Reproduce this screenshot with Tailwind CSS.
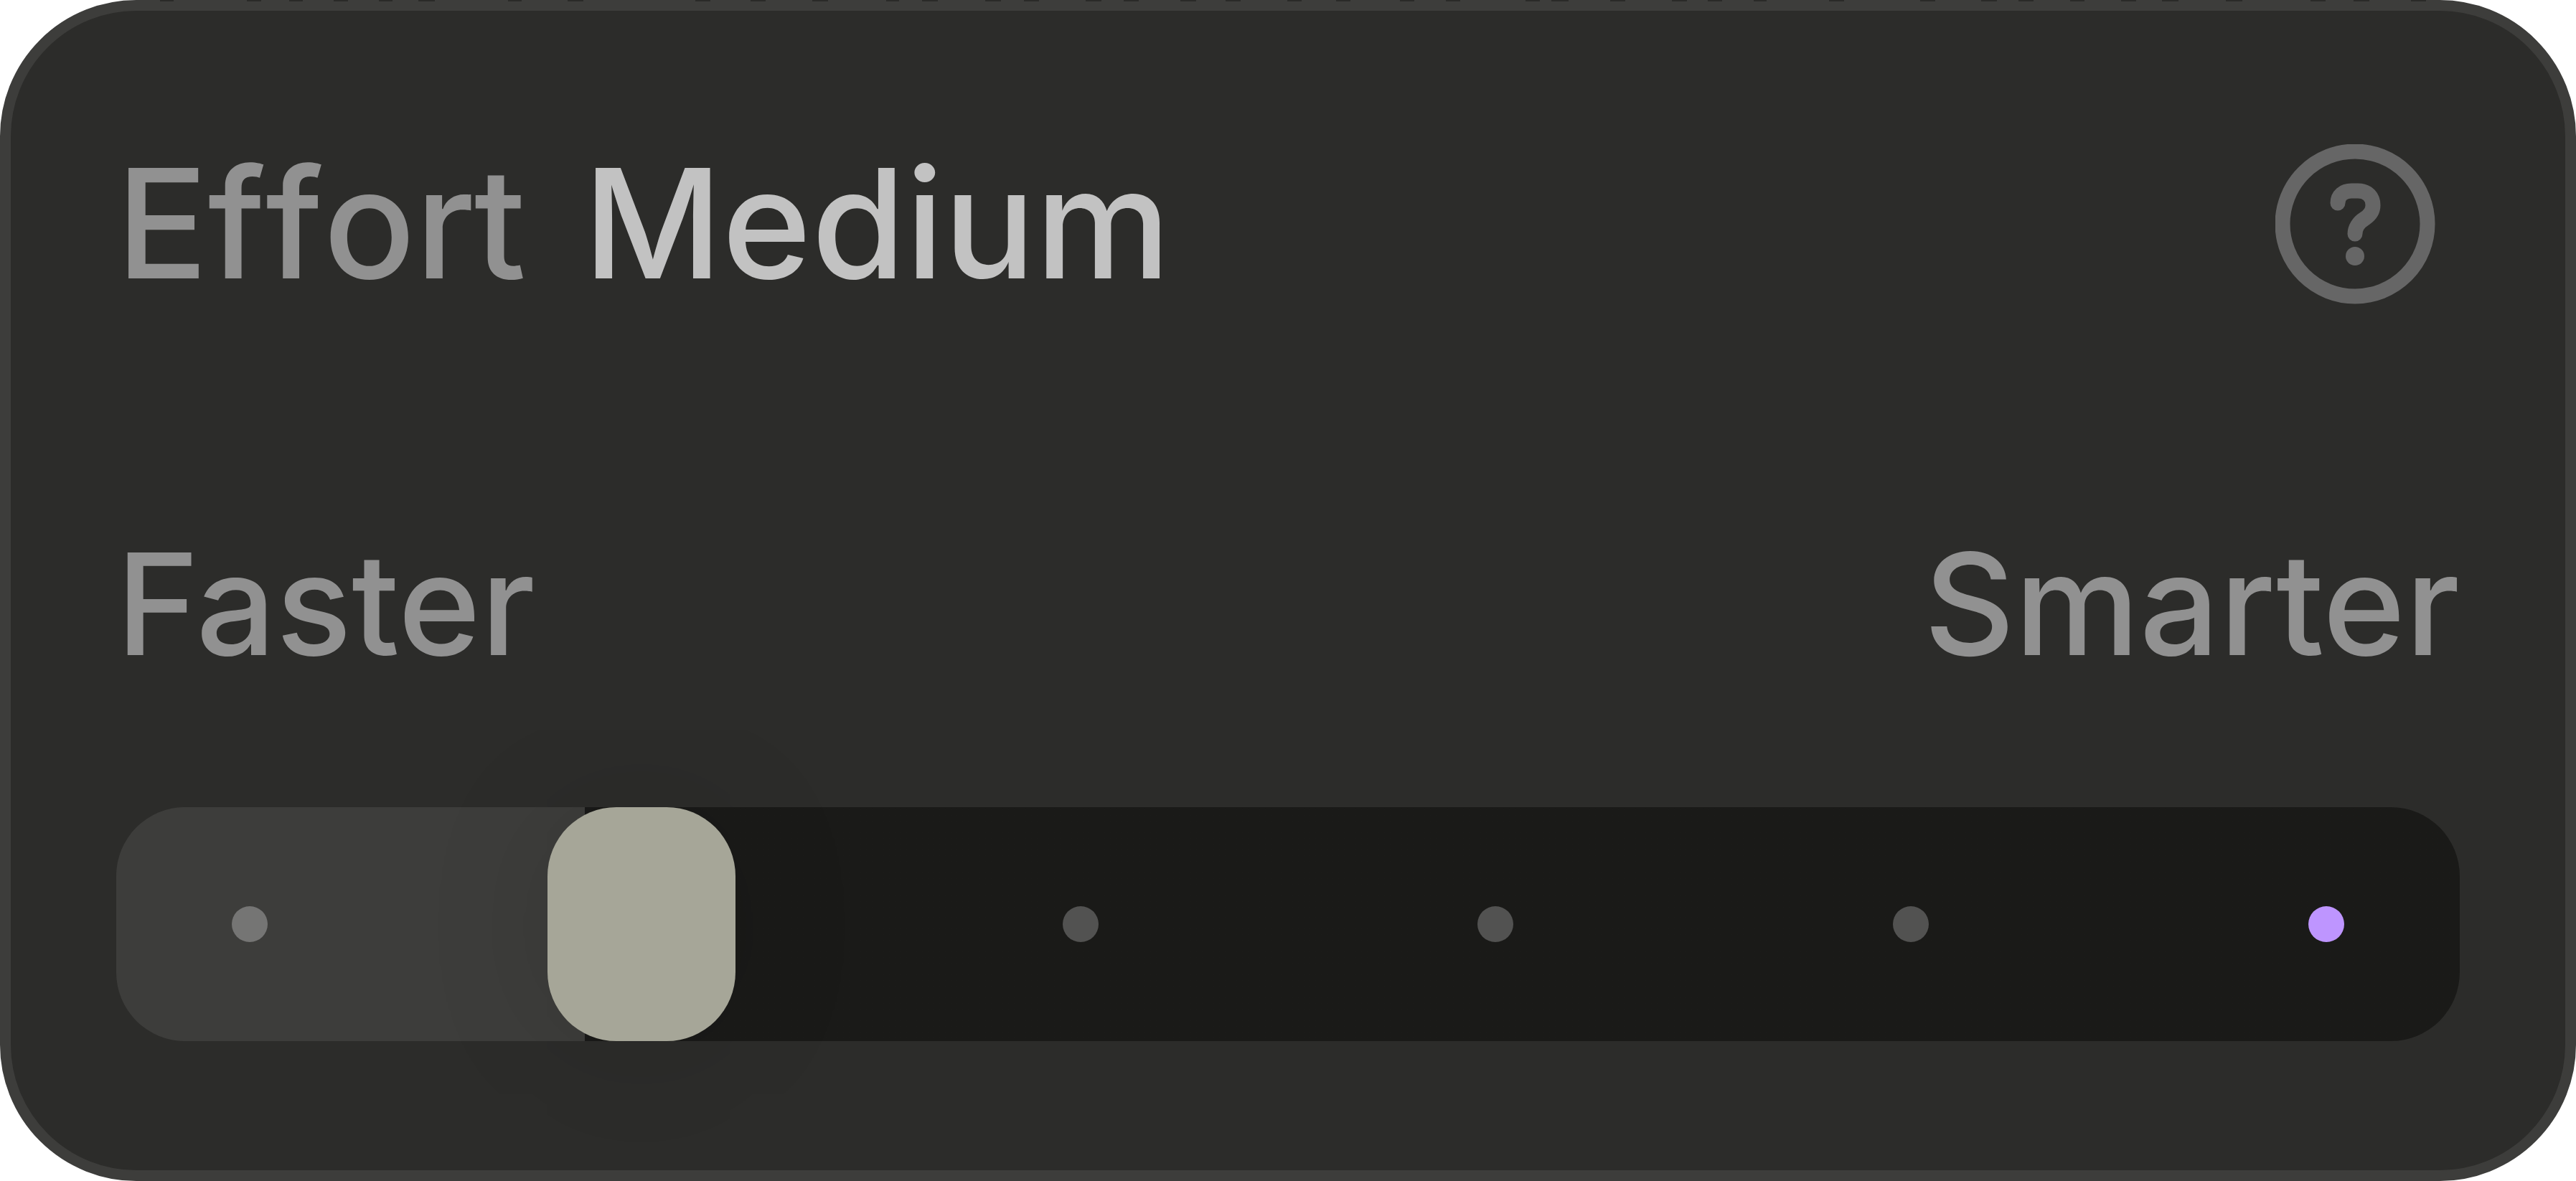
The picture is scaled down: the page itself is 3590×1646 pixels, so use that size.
<!DOCTYPE html>
<html lang="en">
<head>
<meta charset="utf-8">
<title>Effort</title>
<script src="https://cdn.jsdelivr.net/npm/@tailwindcss/browser@4"></script>
</head>
<body class="bg-white font-['Inter',sans-serif]">
<main class="relative flex min-h-screen flex-col rounded-[190px] border-[15px] border-[#3d3d3b] bg-[#2c2c2a] px-[147px] pt-[152px] pb-[180px]">
  <svg class="absolute -inset-x-[15px] -top-[15px] h-[2px] w-[calc(100%+30px)]" viewBox="0 0 3590 2" preserveAspectRatio="none" aria-hidden="true"><path stroke="#2a2a28" stroke-width="4" d="M223 0h19M344 0h20M403 0h19M465 0h20M528 0h19M583 0h23M708 0h19M791 0h22M969 0h21M1046 0h21M1132 0h22M1235 0h18M1285 0h22M1373 0h22M1427 0h21M1513 0h22M1566 0h21M1645 0h22M1708 0h21M1794 0h20M1862 0h20M1951 0h20M2015 0h20M2126 0h20M2162 0h24M2244 0h21M2330 0h21M2380 0h20M2444 0h18M2549 0h21M2676 0h21M2761 0h22M2813 0h21M2885 0h20M2956 0h21M3013 0h23M3102 0h23M3220 0h21M3280 0h22M3360 0h21"/></svg>
  <header class="flex items-start justify-between pr-[34px]">
    <h1 class="flex gap-[80px] text-[212px] leading-[288px] font-medium text-[#919191] [font-kerning:none] [font-feature-settings:'calt'_0]"><span>Effort</span><output for="effort" class="text-[#c2c2c2]">Medium</output></h1>
    <button type="button" aria-label="About effort" class="mt-[34px] text-[#666666]">
      <svg class="size-[223px]" viewBox="0 0 223 223" fill="none" stroke="currentColor" stroke-width="21" stroke-linecap="round" stroke-linejoin="round"><circle cx="111" cy="111" r="101"/><path d="M87 82C87 71 95 65 106 65H115C129 65 136 74 136 85C136 93 132 99 124 104C116 109 111 117 111 125"/><circle cx="111" cy="156" r="13" fill="currentColor" stroke="none"/></svg>
    </button>
  </header>
  <div class="mt-[252px] flex justify-between text-[196px] leading-[270px] font-medium text-[#919191]"><span>Faster</span><span>Smarter</span></div>
  <div class="relative mt-[148px] h-[326px] rounded-[96px] bg-linear-to-r from-[#3d3d3b] from-20% to-[#1a1a18] to-20%">
    <div class="flex h-full items-center justify-between px-[161px]">
      <i class="size-[50px] rounded-full bg-[#757574]"></i>
      <i class="size-[50px] rounded-full bg-[#525251]"></i>
      <i class="size-[50px] rounded-full bg-[#525251]"></i>
      <i class="size-[50px] rounded-full bg-[#525251]"></i>
      <i class="size-[50px] rounded-full bg-[#525251]"></i>
      <i class="size-[50px] rounded-full bg-[#be95ff]"></i>
    </div>
    <input id="effort" type="range" min="0" max="5" value="1" aria-label="Effort" class="absolute inset-0 h-full w-full appearance-none bg-transparent [&::-webkit-slider-thumb]:h-[326px] [&::-webkit-slider-thumb]:w-[262px] [&::-webkit-slider-thumb]:appearance-none [&::-webkit-slider-thumb]:rounded-[96px] [&::-webkit-slider-thumb]:bg-[#a6a698] [&::-webkit-slider-thumb]:shadow-[0_0_180px_rgba(0,0,0,0.12)]">
  </div>
</main>
</body>
</html>
